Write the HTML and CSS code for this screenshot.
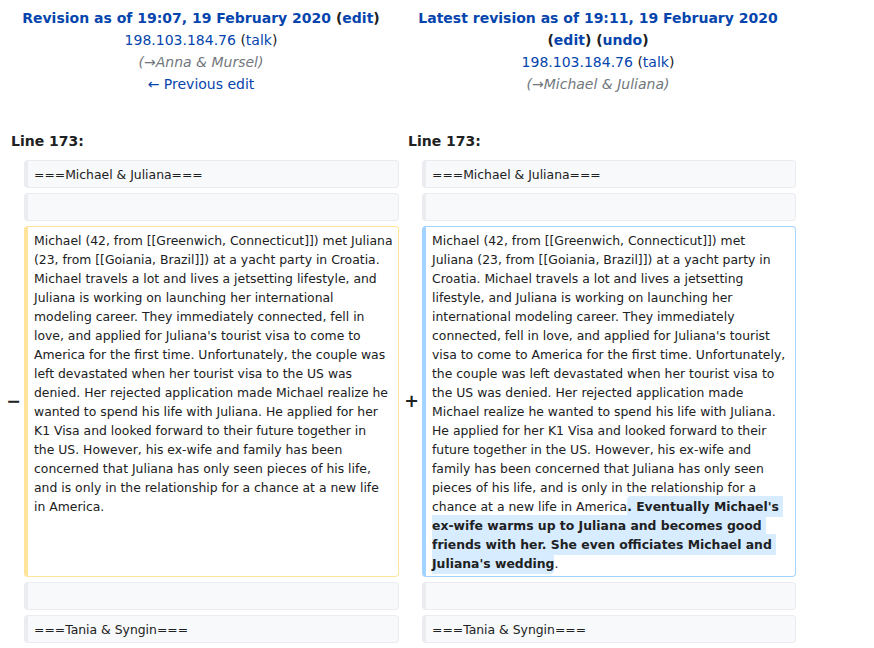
FILE: index.html
```html
<!DOCTYPE html>
<html lang="en">
<head>
<meta charset="utf-8">
<title>Difference between revisions</title>
<link rel="stylesheet" href="styles.css">
</head>
<body>
<div class="diff">
  <div class="title">
    <div class="title-main"><a href="#">Revision as of 19:07, 19 February 2020</a> <span class="paren">(<a href="#">edit</a>)</span></div>
    <div><a href="#">198.103.184.76</a> (<a href="#">talk</a>)</div>
    <div class="comment">(→Anna &amp; Mursel)</div>
    <div><a href="#">← Previous edit</a></div>
  </div>
  <div class="title">
    <div class="title-main"><a href="#">Latest revision as of 19:11, 19 February 2020</a> <span class="paren">(<a href="#">edit</a>) (<a href="#">undo</a>)</span></div>
    <div><a href="#">198.103.184.76</a> (<a href="#">talk</a>)</div>
    <div class="comment">(→Michael &amp; Juliana)</div>
  </div>

  <div class="lineno">Line 173:</div>
  <div class="lineno">Line 173:</div>

  <div class="marker"></div>
  <div class="line context">===Michael &amp; Juliana===</div>
  <div class="marker"></div>
  <div class="line context">===Michael &amp; Juliana===</div>

  <div class="marker"></div>
  <div class="line context"></div>
  <div class="marker"></div>
  <div class="line context"></div>

  <div class="marker marker-del">−</div>
  <div class="line deleted">Michael (42, from [[Greenwich, Connecticut]]) met Juliana (23, from [[Goiania, Brazil]]) at a yacht party in Croatia. Michael travels a lot and lives a jetsetting lifestyle, and Juliana is working on launching her international modeling career. They immediately connected, fell in love, and applied for Juliana's tourist visa to come to America for the first time. Unfortunately, the couple was left devastated when her tourist visa to the US was denied. Her rejected application made Michael realize he wanted to spend his life with Juliana. He applied for her K1 Visa and looked forward to their future together in the&nbsp;US. However, his ex-wife and family has been concerned that Juliana has only seen pieces of his life, and is only in the relationship for a chance at a new life in America.</div>
  <div class="marker marker-add">+</div>
  <div class="line added">Michael (42, from [[Greenwich, Connecticut]]) met Juliana (23, from [[Goiania, Brazil]]) at a yacht party in Croatia. Michael travels a lot and lives a jetsetting lifestyle, and Juliana is working on launching her international modeling career. They immediately connected, fell in love, and applied for Juliana's tourist visa to come to America for the first time. Unfortunately, the couple was left devastated when her tourist visa to the US was denied. Her rejected application made Michael realize he wanted to spend his life with Juliana. He applied for her K1 Visa and looked forward to their future together in the US. However, his ex-wife and family has been concerned that Juliana has only seen pieces of his life, and is only in the relationship for a chance at a new life in America<ins class="change">. Eventually Michael's ex-wife warms up to Juliana and becomes good friends with her. She even officiates Michael and Juliana's wedding</ins>.</div>

  <div class="marker"></div>
  <div class="line context"></div>
  <div class="marker"></div>
  <div class="line context"></div>

  <div class="marker"></div>
  <div class="line context">===Tania &amp; Syngin===</div>
  <div class="marker"></div>
  <div class="line context">===Tania &amp; Syngin===</div>
</div>
</body>
</html>
```

FILE: styles.css
```css
html, body {
  margin: 0;
  padding: 0;
  background: #ffffff;
}

body {
  font-family: "DejaVu Sans", sans-serif;
  font-size: 14px;
  color: #202122;
}

a {
  color: #0645ad;
  text-decoration: none;
}

.diff {
  display: grid;
  grid-template-columns: 14px 375px 15px 374px;
  column-gap: 4px;
  row-gap: 5px;
  padding: 7px 0 0 6px;
}

.title {
  grid-column: span 2;
  text-align: center;
  line-height: 22px;
  margin-bottom: 30px;
  margin-left: -3px;
}

.title-main {
  font-weight: bold;
}

.comment {
  color: #72777d;
  font-style: italic;
}

.lineno {
  grid-column: span 2;
  font-weight: bold;
  line-height: 22px;
  padding-left: 5px;
  margin-bottom: 3px;
}

.marker {
  align-self: center;
  text-align: right;
  font-weight: bold;
  font-size: 17.5px;
  line-height: 1;
}

.marker-del {
  margin-right: -1px;
}

.marker-add {
  margin-right: -1px;
}

.line {
  font-size: 12.4px;
  line-height: 19px;
  padding: 3.5px 6px;
  white-space: pre-wrap;
  word-wrap: break-word;
  border-style: solid;
  border-width: 1px 1px 1px 4px;
  border-radius: 4px;
  min-height: 19px;
}

.context {
  background: #f8f9fa;
  border-color: #eaecf0;
}

.deleted {
  background: #ffffff;
  border-color: #ffe49c;
  padding-right: 4px;
}

.added {
  background: #ffffff;
  border-color: #a3d3ff;
  padding-right: 7px;
}

.change {
  text-decoration: none;
  font-weight: bold;
  background: #d8ecff;
  border-radius: 4px;
  padding: 3px 0;
}
```
